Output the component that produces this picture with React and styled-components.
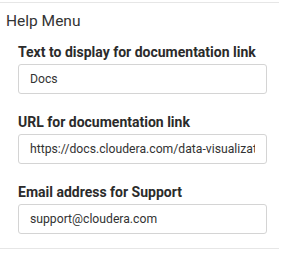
import React from 'react';
import styled, { createGlobalStyle } from 'styled-components';

const GlobalStyle = createGlobalStyle`
    body {
        margin: 0;
        background: #fff;
        font-family: Roboto, 'Liberation Sans', Arial, sans-serif;
    }
`;

const Section = styled.div`
    width: 279px;
    margin-top: 2px;
    border-top: 1px solid #e6e6e6;
    border-bottom: 1px solid #e6e6e6;
    padding: 8px 0 14px;
    box-sizing: border-box;
`;

const Heading = styled.div`
    font-size: 15.5px;
    line-height: 20px;
    color: #333;
    padding-left: 6px;
    margin-bottom: 11px;
`;

const Fields = styled.div`
    display: flex;
    flex-direction: column;
    gap: 18px;
    padding-left: 18px;
`;

const Field = styled.div`
    display: flex;
    flex-direction: column;
    gap: 2px;
`;

const Label = styled.label`
    font-size: 14px;
    line-height: 20px;
    font-weight: 700;
    color: #2b2b2b;
    white-space: nowrap;
`;

const Input = styled.input`
    width: 249px;
    height: 30px;
    box-sizing: border-box;
    border: 1px solid #d4d4d4;
    border-radius: 3px;
    padding: 0 11px;
    font-family: Roboto, 'Liberation Sans', Arial, sans-serif;
    font-size: 12.2px;
    color: #333;
    background: #fff;
    outline: none;
`;

const fields = [
    { label: 'Text to display for documentation link', value: 'Docs' },
    { label: 'URL for documentation link', value: 'https://docs.cloudera.com/data-visualization' },
    { label: 'Email address for Support', value: 'support@cloudera.com' },
];

const App = () => {
    return (
        <>
            <GlobalStyle />
            <Section>
                <Heading>Help Menu</Heading>
                <Fields>
                    {fields.map((f, idx) => (
                        <Field key={idx}>
                            <Label>{f.label}</Label>
                            <Input defaultValue={f.value} readOnly />
                        </Field>
                    ))}
                </Fields>
            </Section>
        </>
    );
};

export default App;
